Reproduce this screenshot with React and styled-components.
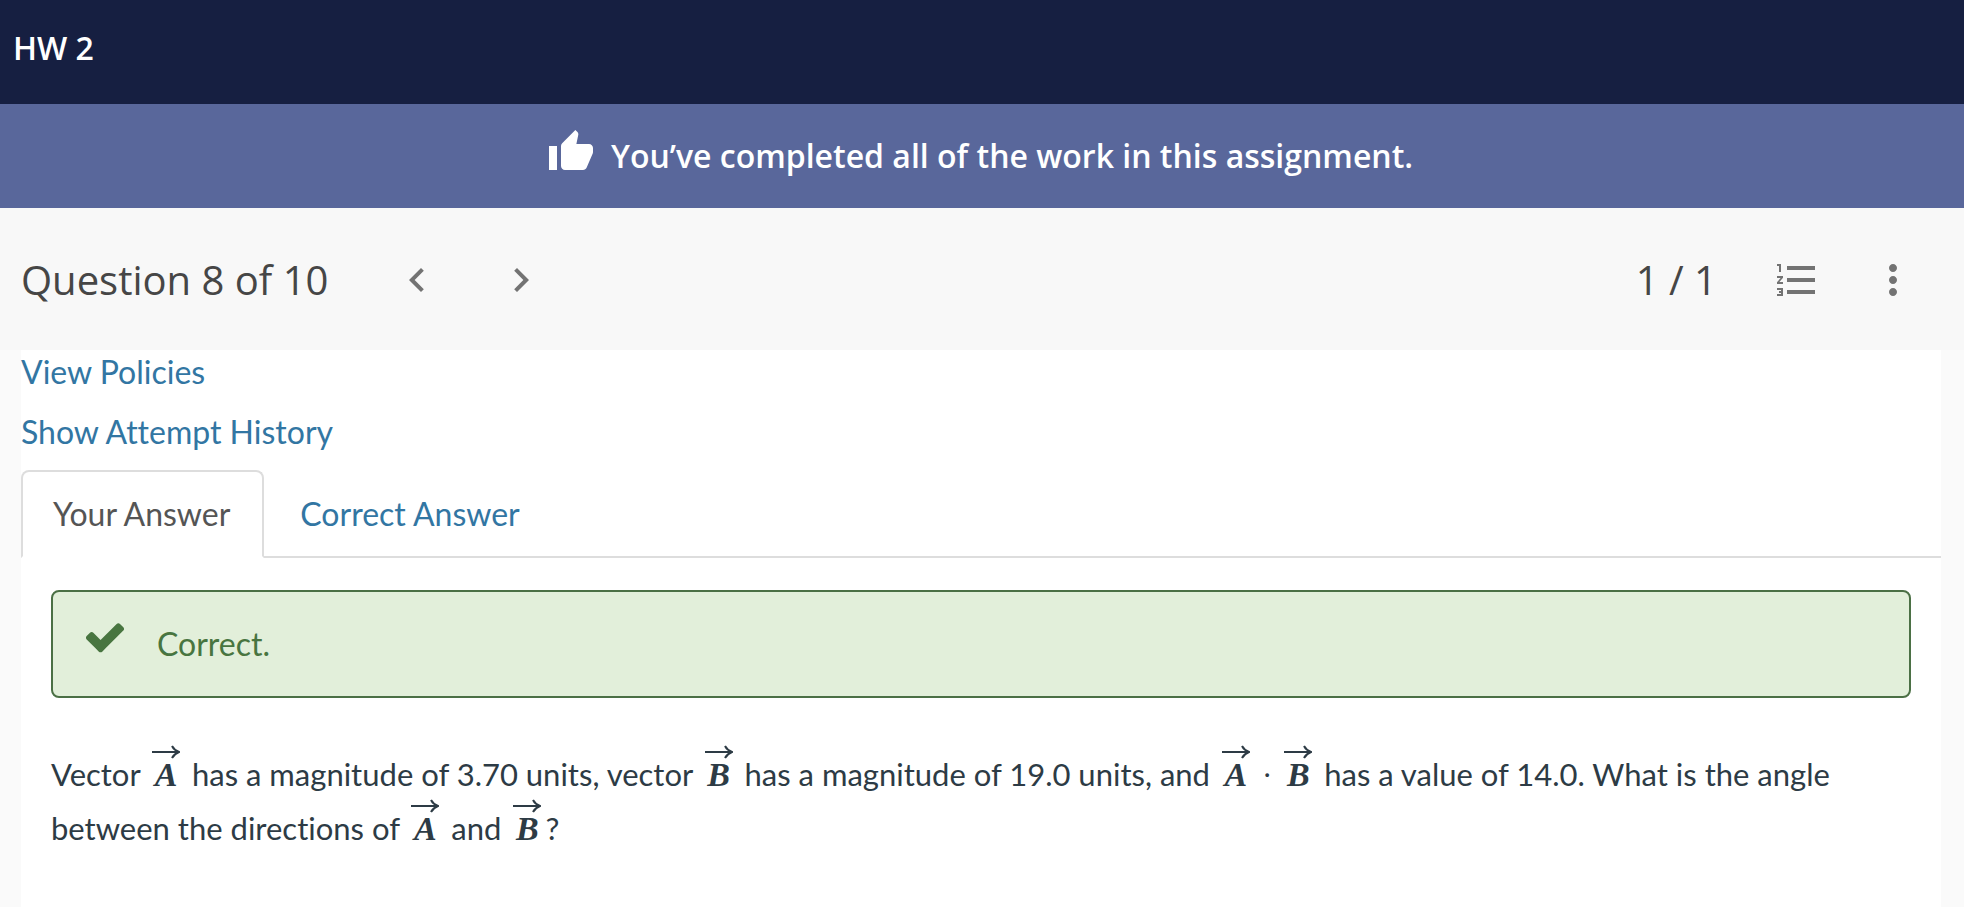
import React, { useState } from 'react';
import styled, { createGlobalStyle } from 'styled-components';
import {
  MdChevronLeft,
  MdChevronRight,
  MdFormatListNumbered,
  MdMoreVert,
  MdThumbUp,
} from 'react-icons/md';

const App = () => {
  const [tab, setTab] = useState('yours');

  return (
    <>
      <GlobalStyle />
      <Header>
        <Title>HW 2</Title>
      </Header>
      <Banner role="status">
        <MdThumbUp />
        <span>You’ve completed all of the work in this assignment.</span>
      </Banner>
      <Toolbar>
        <QuestionTitle>Question 8 of 10</QuestionTitle>
        <Pager>
          <IconButton $pad={28} aria-label="Previous question">
            <MdChevronLeft />
          </IconButton>
          <IconButton $pad={28} aria-label="Next question">
            <MdChevronRight />
          </IconButton>
        </Pager>
        <Score>1 / 1</Score>
        <IconButton $pad={24} aria-label="Question list">
          <MdFormatListNumbered />
        </IconButton>
        <IconButton $pad={24} aria-label="More options">
          <MdMoreVert />
        </IconButton>
      </Toolbar>
      <Panel>
        <Links>
          <TextLink href="#policies">View Policies</TextLink>
          <TextLink href="#history">Show Attempt History</TextLink>
        </Links>
        <Tabs role="tablist">
          <Tab
            role="tab"
            aria-selected={tab === 'yours'}
            $active={tab === 'yours'}
            onClick={() => setTab('yours')}
          >
            Your Answer
          </Tab>
          <Tab
            role="tab"
            aria-selected={tab === 'correct'}
            $active={tab === 'correct'}
            onClick={() => setTab('correct')}
          >
            Correct Answer
          </Tab>
        </Tabs>
        <TabContent role="tabpanel">
          <Feedback>
            <CheckIcon />
            <span>Correct.</span>
          </Feedback>
          <Prompt>
            Vector <Vector name="A" /> has a magnitude of 3.70 units, vector{' '}
            <Vector name="B" /> has a magnitude of 19.0 units, and{' '}
            <Vector name="A" />
            <Dot>·</Dot>
            <Vector name="B" /> has a value of 14.0. What is the angle between
            the directions of <Vector name="A" /> and <Vector name="B" />?
          </Prompt>
        </TabContent>
      </Panel>
    </>
  );
};

const Vector = ({ name }) => (
  <VectorBox>
    <Arrow viewBox="0 0 28 14" aria-hidden="true">
      <path d="M0 7H26M20 1Q22 5 27 7Q22 9 20 13" />
    </Arrow>
    {name}
  </VectorBox>
);

const CheckIcon = () => (
  <svg viewBox="0 0 1792 1792" fill="currentColor" aria-hidden="true">
    <path d="M1671 566q0 40-28 68l-724 724-136 136q-28 28-68 28t-68-28l-136-136-362-362q-28-28-28-68t28-68l136-136q28-28 68-28t68 28l294 295 656-657q28-28 68-28t68 28l136 136q28 28 28 68z" />
  </svg>
);

const GlobalStyle = createGlobalStyle`
  * {
    box-sizing: border-box;
  }

  html, body, #root {
    height: 100%;
  }

  body {
    margin: 0;
    background: #fafafa;
    font-family: Lato, sans-serif;
    font-size: 32px;
    font-variant-ligatures: none;
    line-height: 44px;
  }

  #root {
    display: flex;
    flex-direction: column;
  }
`;

const Header = styled.header`
  display: flex;
  align-items: center;
  flex: none;
  min-height: 104px;
  padding: 0 13px 8px;
  background: #161f41;
  color: #fff;
`;

const Title = styled.h1`
  margin: 0;
  font: 600 32px/44px 'Open Sans', sans-serif;
`;

const Banner = styled.div`
  display: flex;
  align-items: center;
  justify-content: center;
  flex: none;
  gap: 16px;
  min-height: 104px;
  padding-right: 4px;
  background: #59679b;
  color: #fff;
  font: 600 32px/44px 'Open Sans', sans-serif;

  svg {
    width: 48px;
    height: 48px;
    margin-bottom: 8px;
  }
`;

const Toolbar = styled.div`
  display: flex;
  align-items: center;
  flex: none;
  min-height: 142px;
  padding: 2px 23px 0 21px;
  background: #f8f8f8;
  color: #464646;
  font: 400 40px/56px 'Open Sans', sans-serif;
`;

const QuestionTitle = styled.h2`
  margin: 0;
  font: inherit;
`;

const Pager = styled.nav`
  display: flex;
  margin-left: 37px;
`;

const Score = styled.span`
  margin-left: auto;
  margin-right: 32px;
`;

const IconButton = styled.button`
  display: flex;
  padding: 24px ${({ $pad }) => $pad}px;
  border: 0;
  background: none;
  color: #737373;
  cursor: pointer;

  svg {
    width: 48px;
    height: 48px;
  }
`;

const Panel = styled.main`
  flex: 1 0 auto;
  margin: 0 23px 0 21px;
  background: #fff;
`;

const Links = styled.div`
  display: flex;
  flex-direction: column;
  align-items: flex-start;
  gap: 16px;
  padding-bottom: 16px;
`;

const TextLink = styled.a`
  color: #3276a3;
  text-decoration: none;

  &:hover {
    text-decoration: underline;
  }
`;

const Tabs = styled.div`
  display: flex;
  gap: 4px;
  border-bottom: 2px solid #ddd;
`;

const Tab = styled.button`
  margin-bottom: -2px;
  padding: 20px 32px 20px 30px;
  border: 2px solid ${({ $active }) => ($active ? '#ddd' : 'transparent')};
  border-bottom-color: ${({ $active }) => ($active ? '#fff' : 'transparent')};
  border-radius: 8px 8px 0 0;
  background: ${({ $active }) => ($active ? '#fff' : 'none')};
  color: ${({ $active }) => ($active ? '#555' : '#3276a3')};
  font: inherit;
  font-variant-ligatures: none;
  cursor: pointer;
`;

const TabContent = styled.section`
  padding: 32px 30px;
`;

const Feedback = styled.div`
  display: flex;
  align-items: center;
  gap: 30px;
  min-height: 108px;
  padding: 0 30px;
  border: 2px solid #4b7045;
  border-radius: 8px;
  background: #e2efda;
  color: #487540;

  svg {
    width: 44px;
    height: 44px;
    margin-bottom: 14px;
  }
`;

const Prompt = styled.p`
  margin: 49px 0 0;
  color: #2d3b45;
  font-size: 31px;
  line-height: 54px;
`;

const VectorBox = styled.span`
  position: relative;
  display: inline-block;
  width: 28px;
  margin: 0 4px;
  text-align: center;
  font: italic 700 34px/40px 'Liberation Serif', serif;
`;

const Arrow = styled.svg`
  position: absolute;
  top: -10px;
  left: 0;
  width: 28px;
  height: 14px;
  fill: none;
  stroke: currentColor;
  stroke-width: 2;
`;

const Dot = styled.span`
  margin: 0 8px;
  font-family: 'Liberation Serif', serif;
  line-height: 40px;
`;

export default App;
